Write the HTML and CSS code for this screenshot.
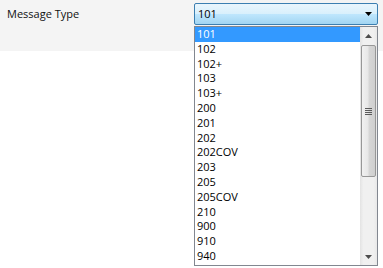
FILE: index.html
```html
<!DOCTYPE html>
<html>
<head>
<meta charset="utf-8">
<link rel="stylesheet" href="styles.css">
</head>
<body>
<div class="panel">
  <div class="label">Message Type</div>
  <div class="combo">
    <span class="combo-value">101</span>
    <svg class="combo-arrow" width="7" height="4" viewBox="0 0 7 4"><path d="M0 0H7L3.5 4Z" fill="#000"/></svg>
  </div>
</div>
<div class="dropdown">
  <ul class="options">
    <li class="option selected">101</li>
    <li class="option">102</li>
    <li class="option">102+</li>
    <li class="option">103</li>
    <li class="option">103+</li>
    <li class="option">200</li>
    <li class="option">201</li>
    <li class="option">202</li>
    <li class="option">202COV</li>
    <li class="option">203</li>
    <li class="option">205</li>
    <li class="option">205COV</li>
    <li class="option">210</li>
    <li class="option">900</li>
    <li class="option">910</li>
    <li class="option">940</li>
  </ul>
  <div class="scrollbar">
    <div class="sb-btn">
      <svg width="7" height="4" viewBox="0 0 7 4"><path d="M0 4H7L3.5 0Z" fill="#4d4d4d"/></svg>
    </div>
    <div class="sb-track">
      <div class="sb-thumb">
        <div class="grip"><span></span><span></span><span></span><span></span></div>
      </div>
    </div>
    <div class="sb-btn">
      <svg width="7" height="4" viewBox="0 0 7 4"><path d="M0 0H7L3.5 4Z" fill="#4d4d4d"/></svg>
    </div>
  </div>
</div>
</body>
</html>
```
FILE: styles.css
```css
html, body {
  margin: 0;
  padding: 0;
  background: #ffffff;
  font-family: "Open Sans", "Noto Sans", sans-serif;
  font-size: 11px;
  color: #000;
}
.panel {
  height: 51px;
  background: #f4f4f4;
  display: flex;
  align-items: flex-start;
  padding-left: 7px;
  box-sizing: border-box;
}
.label {
  width: 187px;
  margin-top: 6px;
  line-height: 16px;
  color: #111;
}
.combo {
  margin-top: 3px;
  width: 184px;
  height: 22px;
  box-sizing: border-box;
  border: 1px solid #3c7fb1;
  border-radius: 2px;
  background: linear-gradient(to bottom, #eaf6fd 0%, #d9f0fc 48%, #bee6fd 52%, #a2d5f2 100%);
  display: flex;
  align-items: center;
  justify-content: space-between;
  padding: 0 4px 0 3px;
}
.combo-value {
  line-height: 16px;
}
.combo-arrow {
  display: block;
  margin-right: 1px;
}
.dropdown {
  position: absolute;
  left: 194px;
  top: 26px;
  width: 184px;
  height: 240px;
  box-sizing: border-box;
  border: 1px solid #828790;
  background: #fff;
  display: flex;
  overflow: hidden;
}
.options {
  list-style: none;
  margin: 0;
  padding: 0;
  flex: 1;
  overflow: hidden;
}
.option {
  height: 14.8px;
  line-height: 14.8px;
  padding-left: 2px;
  white-space: nowrap;
}
.option.selected {
  background: #3399ff;
  color: #fff;
}
.scrollbar {
  width: 17px;
  display: flex;
  flex-direction: column;
  background: linear-gradient(to right, #e3e3e3 0%, #f0f0f0 20%, #f0f0f0 80%, #e8e8e8 100%);
}
.sb-btn {
  height: 17px;
  display: flex;
  align-items: center;
  justify-content: center;
}
.sb-track {
  flex: 1;
  padding: 1px 1px;
}
.sb-thumb {
  height: 132px;
  box-sizing: border-box;
  border: 1px solid #979797;
  border-radius: 2px;
  background: linear-gradient(to right, #f1f1f1 0%, #e7e7e7 45%, #d6d6d6 55%, #cfcfcf 100%);
  display: flex;
  align-items: center;
  justify-content: center;
}
.grip {
  display: flex;
  flex-direction: column;
  gap: 1px;
}
.grip span {
  display: block;
  width: 7px;
  height: 1px;
  background: #5a5a5a;
}
```
